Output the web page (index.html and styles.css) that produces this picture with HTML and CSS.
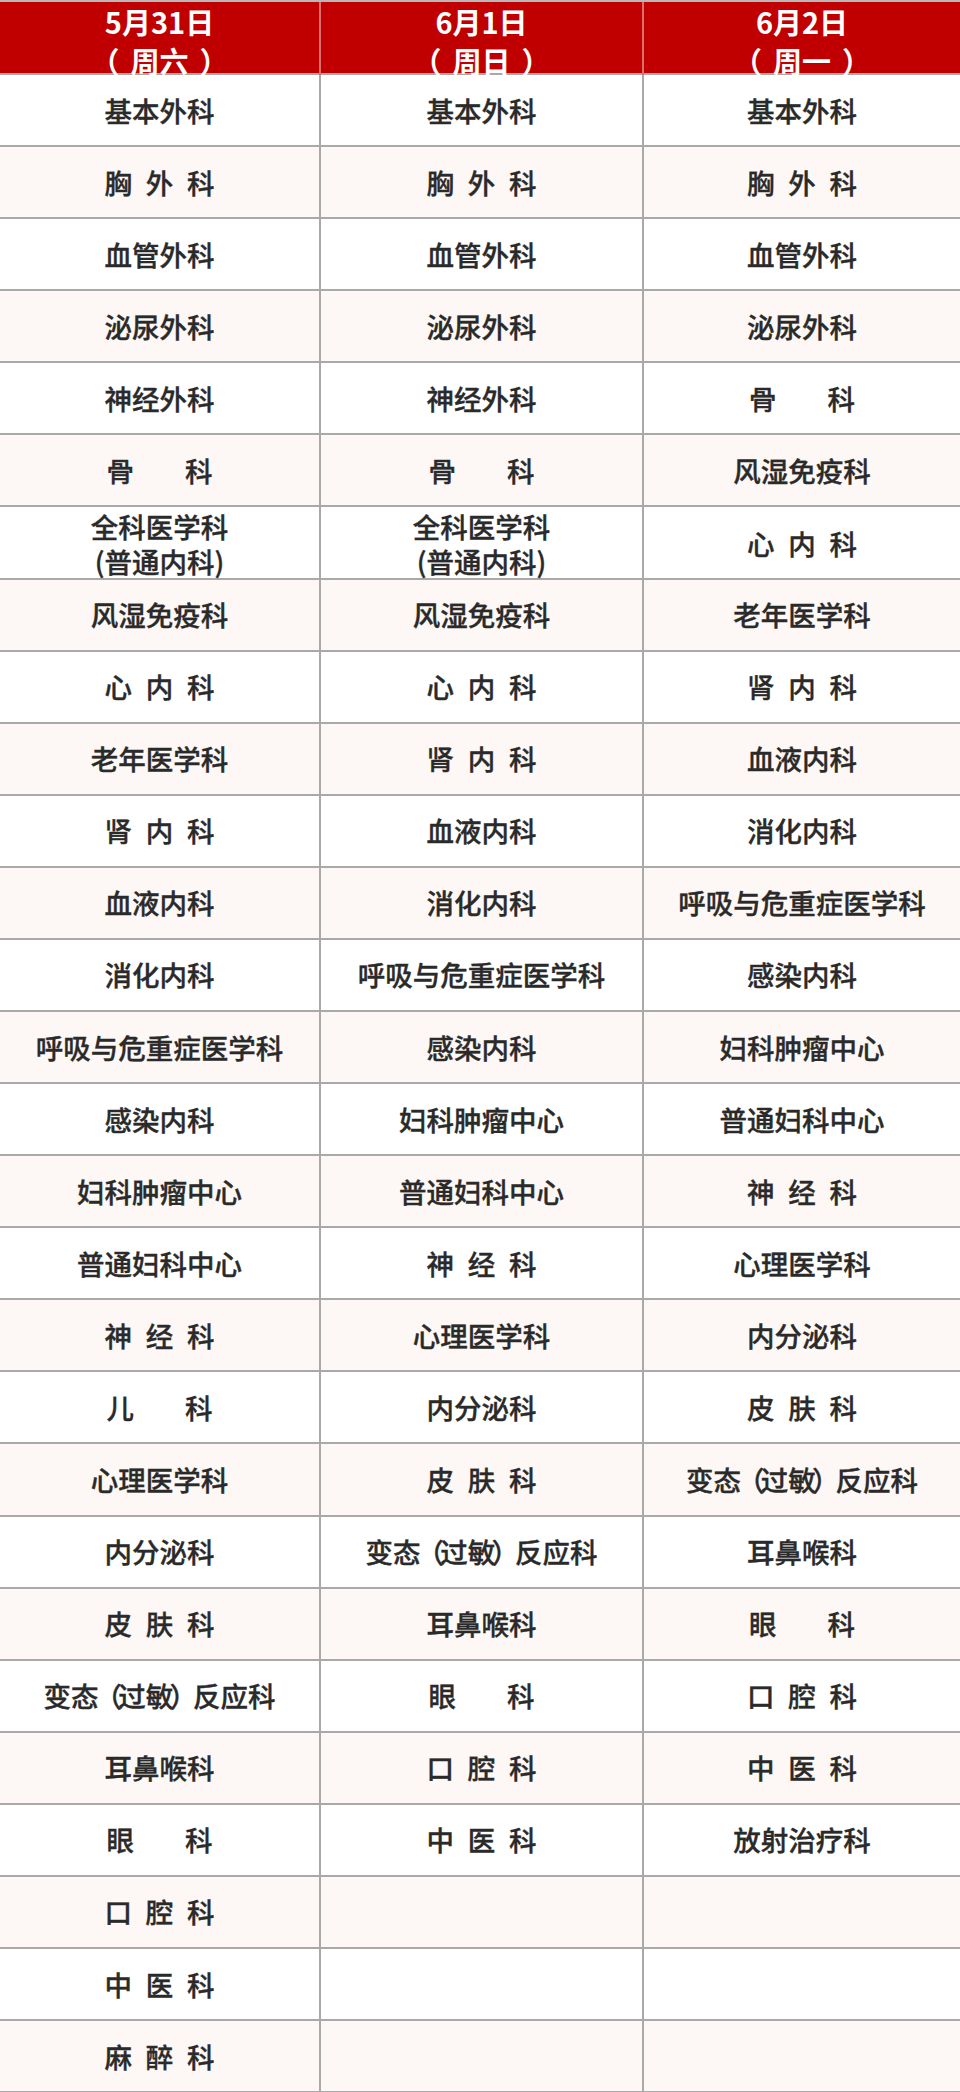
FILE: index.html
```html
<!DOCTYPE html>
<html lang="zh-CN">
<head>
<meta charset="utf-8">
<title>门诊排班</title>
<link rel="stylesheet" href="styles.css">
</head>
<body>
<div class="table">
  <div class="row head">
    <div class="cell"><span class="l">5月31日</span><span class="l">（<span class="wk">周六</span>）</span></div>
    <div class="cell"><span class="l">6月1日</span><span class="l">（<span class="wk">周日</span>）</span></div>
    <div class="cell"><span class="l">6月2日</span><span class="l">（<span class="wk">周一</span>）</span></div>
  </div>
  <div class="body">
    <div class="row"><div class="cell">基本外科</div><div class="cell">基本外科</div><div class="cell">基本外科</div></div>
    <div class="row"><div class="cell"><span class="s1">胸外科</span></div><div class="cell"><span class="s1">胸外科</span></div><div class="cell"><span class="s1">胸外科</span></div></div>
    <div class="row"><div class="cell">血管外科</div><div class="cell">血管外科</div><div class="cell">血管外科</div></div>
    <div class="row"><div class="cell">泌尿外科</div><div class="cell">泌尿外科</div><div class="cell">泌尿外科</div></div>
    <div class="row"><div class="cell">神经外科</div><div class="cell">神经外科</div><div class="cell"><span class="s2">骨科</span></div></div>
    <div class="row"><div class="cell"><span class="s2">骨科</span></div><div class="cell"><span class="s2">骨科</span></div><div class="cell">风湿免疫科</div></div>
    <div class="row"><div class="cell two"><span class="l">全科医学科</span><span class="l">(普通内科)</span></div><div class="cell two"><span class="l">全科医学科</span><span class="l">(普通内科)</span></div><div class="cell"><span class="s1">心内科</span></div></div>
    <div class="row"><div class="cell">风湿免疫科</div><div class="cell">风湿免疫科</div><div class="cell">老年医学科</div></div>
    <div class="row"><div class="cell"><span class="s1">心内科</span></div><div class="cell"><span class="s1">心内科</span></div><div class="cell"><span class="s1">肾内科</span></div></div>
    <div class="row"><div class="cell">老年医学科</div><div class="cell"><span class="s1">肾内科</span></div><div class="cell">血液内科</div></div>
    <div class="row"><div class="cell"><span class="s1">肾内科</span></div><div class="cell">血液内科</div><div class="cell">消化内科</div></div>
    <div class="row"><div class="cell">血液内科</div><div class="cell">消化内科</div><div class="cell">呼吸与危重症医学科</div></div>
    <div class="row"><div class="cell">消化内科</div><div class="cell">呼吸与危重症医学科</div><div class="cell">感染内科</div></div>
    <div class="row"><div class="cell">呼吸与危重症医学科</div><div class="cell">感染内科</div><div class="cell">妇科肿瘤中心</div></div>
    <div class="row"><div class="cell">感染内科</div><div class="cell">妇科肿瘤中心</div><div class="cell">普通妇科中心</div></div>
    <div class="row"><div class="cell">妇科肿瘤中心</div><div class="cell">普通妇科中心</div><div class="cell"><span class="s1">神经科</span></div></div>
    <div class="row"><div class="cell">普通妇科中心</div><div class="cell"><span class="s1">神经科</span></div><div class="cell">心理医学科</div></div>
    <div class="row"><div class="cell"><span class="s1">神经科</span></div><div class="cell">心理医学科</div><div class="cell">内分泌科</div></div>
    <div class="row"><div class="cell"><span class="s2">儿科</span></div><div class="cell">内分泌科</div><div class="cell"><span class="s1">皮肤科</span></div></div>
    <div class="row"><div class="cell">心理医学科</div><div class="cell"><span class="s1">皮肤科</span></div><div class="cell"><span>变态<span class="fp">（</span>过敏<span class="fp">）</span>反应科</span></div></div>
    <div class="row"><div class="cell">内分泌科</div><div class="cell"><span>变态<span class="fp">（</span>过敏<span class="fp">）</span>反应科</span></div><div class="cell">耳鼻喉科</div></div>
    <div class="row"><div class="cell"><span class="s1">皮肤科</span></div><div class="cell">耳鼻喉科</div><div class="cell"><span class="s2">眼科</span></div></div>
    <div class="row"><div class="cell"><span>变态<span class="fp">（</span>过敏<span class="fp">）</span>反应科</span></div><div class="cell"><span class="s2">眼科</span></div><div class="cell"><span class="s1">口腔科</span></div></div>
    <div class="row"><div class="cell">耳鼻喉科</div><div class="cell"><span class="s1">口腔科</span></div><div class="cell"><span class="s1">中医科</span></div></div>
    <div class="row"><div class="cell"><span class="s2">眼科</span></div><div class="cell"><span class="s1">中医科</span></div><div class="cell">放射治疗科</div></div>
    <div class="row"><div class="cell"><span class="s1">口腔科</span></div><div class="cell"></div><div class="cell"></div></div>
    <div class="row"><div class="cell"><span class="s1">中医科</span></div><div class="cell"></div><div class="cell"></div></div>
    <div class="row"><div class="cell"><span class="s1">麻醉科</span></div><div class="cell"></div><div class="cell"></div></div>
  </div>
</div>
</body>
</html>
```

FILE: styles.css
```css
html, body {
  margin: 0;
  padding: 0;
  background: #ffffff;
}

body {
  font-family: "Noto Sans CJK SC", "Noto Sans", sans-serif;
  color: #2a2a2a;
}

.table {
  width: 960px;
  border-top: 2px solid #b8b8b8;
}

.row {
  display: grid;
  grid-template-columns: 321px 323px 316px;
  box-sizing: border-box;
  height: 72.08px;
  border-bottom: 2px solid #a9a9a9;
}

.body .row:nth-child(even) {
  background: #fdf8f5;
}

.cell {
  display: flex;
  flex-direction: column;
  align-items: center;
  justify-content: center;
  font-size: 27.5px;
  font-weight: 500;
  -webkit-text-stroke: 0.35px currentColor;
  line-height: 35px;
  white-space: nowrap;
}

.cell:not(:last-child) {
  border-right: 2px solid #a9a9a9;
}

.l {
  display: block;
}

.head {
  height: 73px;
  background: #c00000;
  border-bottom: 2px solid #a9a9a9;
}

.head .cell {
  justify-content: flex-start;
  color: #ffffff;
  font-size: 29px;
  font-weight: 700;
  -webkit-text-stroke: 0;
  line-height: 39px;
}

.head .cell:not(:last-child) {
  border-right: 2px solid #d9706e;
}

.wk {
  margin: 0 0.38em;
}

.two {
  padding-top: 2px;
}

.s1 {
  letter-spacing: 0.5em;
  margin-right: -0.5em;
}

.s2 {
  letter-spacing: 1.85em;
  margin-right: -1.85em;
}

.fp {
  margin: 0 -0.14em;
}
```
